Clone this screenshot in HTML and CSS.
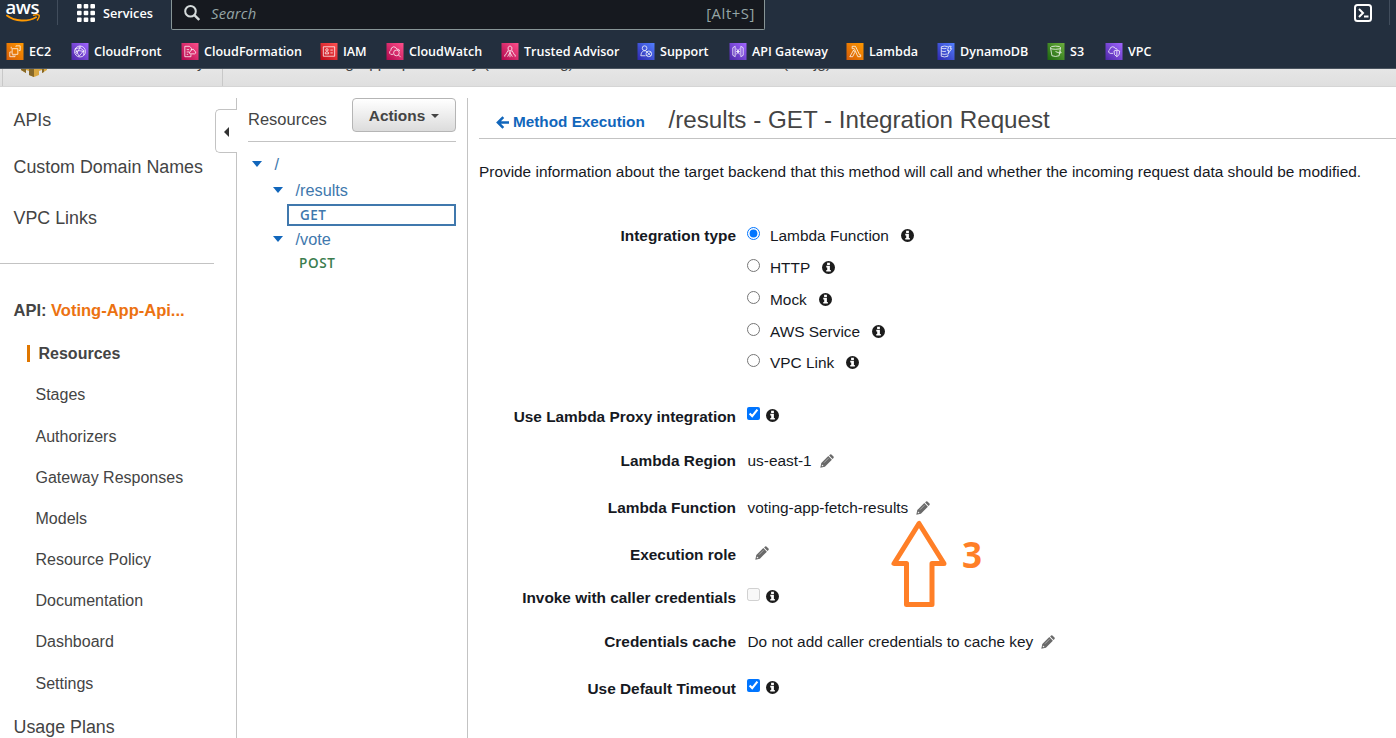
FILE: index.html
```html
<!DOCTYPE html>
<html lang="en">
<head>
<meta charset="utf-8">
<title>API Gateway</title>
<link rel="stylesheet" href="styles.css">
</head>
<body>
<svg width="0" height="0" class="defs">
  <defs>
    <linearGradient id="orange" x1="0" y1="1" x2="1" y2="0"><stop offset="0" stop-color="#d45b07"/><stop offset="1" stop-color="#ff9900"/></linearGradient>
    <linearGradient id="purple" x1="0" y1="1" x2="1" y2="0"><stop offset="0" stop-color="#4d27a8"/><stop offset="1" stop-color="#a166ff"/></linearGradient>
    <linearGradient id="pink" x1="0" y1="1" x2="1" y2="0"><stop offset="0" stop-color="#b0084d"/><stop offset="1" stop-color="#ff4f8b"/></linearGradient>
    <linearGradient id="red" x1="0" y1="1" x2="1" y2="0"><stop offset="0" stop-color="#bd0816"/><stop offset="1" stop-color="#ff5252"/></linearGradient>
    <linearGradient id="blue" x1="0" y1="1" x2="1" y2="0"><stop offset="0" stop-color="#2e27ad"/><stop offset="1" stop-color="#527fff"/></linearGradient>
    <linearGradient id="green" x1="0" y1="1" x2="1" y2="0"><stop offset="0" stop-color="#1b660f"/><stop offset="1" stop-color="#6cae3e"/></linearGradient>
    <symbol id="info" viewBox="0 0 14 14"><circle cx="7" cy="7" r="7" fill="#1c1c1c"/><path d="M5.500 2h3v2.200h-3zM4.600 5.200h3.900v4.400h1v1.800H4.600V9.600h1V7h-1z" fill="#fff"/></symbol>
    <symbol id="pencil" viewBox="0 0 14 14"><path d="M.3 13.700l1-4.600 7-7 3.600 3.600-7 7zM9.100 1.500l1-1q.7-.6 1.300 0l2.100 2.100q.6.6 0 1.300l-1 1z" fill="#6a6a6a"/><path d="M2 10.400l1.600 1.600-1.200.3-.7-.7z" fill="#fff"/><path d="M4 8.700l4.500-4.500" stroke="#c4c4c4" stroke-width=".7"/></symbol>
  </defs>
</svg>

<header class="nav">
  <div class="nav-top">
    <div class="logo">
      <span>aws</span>
      <svg class="smile" width="35" height="9" viewBox="0 0 35 9"><path d="M1 1.500C9 7.800 22 8 30 3.200" fill="none" stroke="#ff9900" stroke-width="1.900" stroke-linecap="round"/><path d="M27.500 1.200c2.500-.6 5-.6 5.600 0 .5.800-.4 3.400-1.700 4.800" fill="none" stroke="#ff9900" stroke-width="1.400" stroke-linecap="round"/></svg>
    </div>
    <i class="sep"></i>
    <svg class="grid-icon" width="18" height="18" viewBox="0 0 18 18" fill="#fff"><rect width="4.6" height="4.6" rx="1"/><rect x="6.7" width="4.6" height="4.6" rx="1"/><rect x="13.4" width="4.6" height="4.6" rx="1"/><rect y="6.7" width="4.6" height="4.6" rx="1"/><rect x="6.7" y="6.7" width="4.6" height="4.6" rx="1"/><rect x="13.4" y="6.7" width="4.6" height="4.6" rx="1"/><rect y="13.4" width="4.6" height="4.6" rx="1"/><rect x="6.7" y="13.4" width="4.6" height="4.6" rx="1"/><rect x="13.4" y="13.4" width="4.6" height="4.6" rx="1"/></svg>
    <span class="services">Services</span>
    <div class="search">
      <svg width="16" height="16" viewBox="0 0 16 16" fill="none" stroke="#d5dbdb" stroke-width="2"><circle cx="6.5" cy="6.3" r="5.3"/><path d="M10.4 10.2l4.8 4.8" stroke-width="2.4"/></svg>
      <span class="ph">Search</span><span class="key">[Alt+S]</span>
    </div>
    <svg class="shell" width="18" height="18" viewBox="0 0 18 18" fill="none" stroke="#fff" stroke-width="2"><rect x="1" y="1" width="16" height="16" rx="2.5"/><path d="M5 5l4 4-4 4M10 12.6h4.5"/></svg>
    <i class="sep faint"></i>
  </div>
  <div class="favs">
    <a><svg viewBox="0 0 18 18"><rect width="18" height="18" fill="url(#orange)"/><path d="M6 6h6v6H6zM10 4V3h4.500v5H13M5.500 9.500H3.500v5H9V13M5 4v2M7 13v1"/></svg><span>EC2</span></a>
    <a><svg viewBox="0 0 18 18"><rect width="18" height="18" fill="url(#purple)"/><circle cx="9" cy="9" r="5.800"/><path d="M4 6l5-1 4 3-5 6M5 12l4-7M4 6l4 8M13 8v5M9 3v2M3.500 10l4-2 6 1"/></svg><span>CloudFront</span></a>
    <a><svg viewBox="0 0 18 18"><rect width="18" height="18" fill="url(#pink)"/><path d="M3.500 14.500V3.500h5l2 2v2M3.500 14.500H10V12M5.500 7H8M5.500 9.500H8M5.500 12H7M9 11.500h5q1.500-.5 1-2l-1-1q-1-3-3.500-1.500l-.5 1.500q-2 .5-1.500 2.500z"/></svg><span>CloudFormation</span></a>
    <a><svg viewBox="0 0 18 18"><rect width="18" height="18" fill="url(#red)"/><path d="M3 4h12v10H3zM10.500 7.500H13M10.500 10.500H13M5 11.500V10q1.700-1.500 3.500 0v1.500z"/><circle cx="6.800" cy="7.300" r="1.300"/></svg><span>IAM</span></a>
    <a><svg viewBox="0 0 18 18"><rect width="18" height="18" fill="url(#pink)"/><path d="M7 12H4.500q-2-1-1-3l1-1q0-3.500 3-4 2.500 0 3.500 2.500 2.500-.5 3 2M12.700 12.700l2.300 2.300"/><circle cx="10.500" cy="10.500" r="3"/></svg><span>CloudWatch</span></a>
    <a><svg viewBox="0 0 18 18"><rect width="18" height="18" fill="url(#pink)"/><path d="M7 7V4.500l2-1.500 2 1.500V7L9 8.500zM4 13l3-5 2 2 2-2 3 5M6.500 14.500L9 10l2.500 4.500M3.500 12.500v2M14.500 12.500v2M9 10v5"/></svg><span>Trusted Advisor</span></a>
    <a><svg viewBox="0 0 18 18"><rect width="18" height="18" fill="url(#blue)"/><circle cx="7.500" cy="5.500" r="2.500"/><path d="M8.500 13.500h-5q0-4 3-5.200h2l1.500 1"/><circle cx="12" cy="11.500" r="3"/><path d="M10 9.500l4 4M14 9.500l-4 4"/></svg><span>Support</span></a>
    <a><svg viewBox="0 0 18 18"><rect width="18" height="18" fill="url(#purple)"/><path d="M6 3.500v11l-2.500-1.500V5zM12 3.500v11l2.500-1.500V5zM7.500 6l3 6M10.500 6l-3 6M7 9h4"/></svg><span>API Gateway</span></a>
    <a><svg viewBox="0 0 18 18"><rect width="18" height="18" fill="url(#orange)"/><path d="M6 3.500h3.500l4.300 9h1.200v2h-3L8.300 6H6zM7.500 7.500l1.300 2.500-2.300 4.500h-3z"/></svg><span>Lambda</span></a>
    <a><svg viewBox="0 0 18 18"><rect width="18" height="18" fill="url(#blue)"/><path d="M4 4q3.500-1.500 7 0M4 4v10q3.500 1.500 7 0v-2M4 5.500q3 1 5.500.2M4 8.500q3 1 5 .2M4 11.500q3 1 6 .2M12 3.500h2.500L13.500 6H15l-3.800 5.500 1-3.500h-1.700z"/></svg><span>DynamoDB</span></a>
    <a><svg viewBox="0 0 18 18"><rect width="18" height="18" fill="url(#green)"/><ellipse cx="8.500" cy="5" rx="5.300" ry="1.700"/><path d="M3.200 5l1.500 8.500q3.800 1.500 7.600 0L13.800 5M8.500 9q5 2.500 6 1.500.3-.8-1.500-1.700"/></svg><span>S3</span></a>
    <a><svg viewBox="0 0 18 18"><rect width="18" height="18" fill="url(#purple)"/><path d="M8 11H5q-2.500-.7-1.500-3l1-1q.5-3 3-3 2.500 0 3 2 1.500-.5 2 1M9 8.500l3-1 3 1q.5 4.500-3 6-3.500-1.500-3-6zM12 7.500v7"/></svg><span>VPC</span></a>
  </div>
</header>

<div class="crumbs">
  <div class="crumb-home"><svg width="26" height="26" viewBox="0 0 26 26"><path d="M0 3h26v16l-5 3v-3l-3 1v4l-5 2-5-2v-4l-3-1v3l-5-3z" fill="#d9a741"/><path d="M0 14l5 2v6l-5-3zM8 16l5 2v8l-5-2zM21 16l2-1v6l-2 1z" fill="#876929"/></svg><span>Amazon API Gateway</span></div>
  <div class="crumb-path"><span class="c1">APIs</span><span class="c2">Voting-App-Api-Gateway (hk4e2u0lbg)</span><span class="c3">Resources</span><span class="c4">(n3ujg)</span></div>
</div>

<div class="body">
  <aside class="side">
    <nav class="side-nav">
      <a class="big apis">APIs</a>
      <a class="big custom">Custom Domain Names</a>
      <a class="big links">VPC Links</a>
      <hr>
      <div class="api">API: <b>Voting-App-Api...</b></div>
      <ul>
        <li class="on"><span>Resources</span></li><li>Stages</li><li>Authorizers</li><li>Gateway Responses</li><li>Models</li><li>Resource Policy</li><li>Documentation</li><li>Dashboard</li><li>Settings</li>
      </ul>
      <a class="big usage">Usage Plans</a>
    </nav>
    <div class="tab"><svg width="5" height="10" viewBox="0 0 5 10"><path d="M5 0v10L0 5z" fill="#333"/></svg></div>
  </aside>

  <section class="res">
    <div class="res-head"><span>Resources</span><button>Actions <svg width="8" height="4" viewBox="0 0 8 4"><path d="M0 0h8L4 4z" fill="#444"/></svg></button></div>
    <div class="tree">
      <div class="node l0"><svg width="10" height="6" viewBox="0 0 10 6"><path d="M0 0h10L5 6z"/></svg>/</div>
      <div class="node l1"><svg width="10" height="6" viewBox="0 0 10 6"><path d="M0 0h10L5 6z"/></svg>/results</div>
      <div class="verb get">GET</div>
      <div class="node l1"><svg width="10" height="6" viewBox="0 0 10 6"><path d="M0 0h10L5 6z"/></svg>/vote</div>
      <div class="verb post">POST</div>
    </div>
  </section>

  <main class="main">
    <div class="head">
      <a class="back"><svg width="13" height="13" viewBox="0 0 13 13" fill="none" stroke="#1166bb" stroke-width="2.500"><path d="M7.300 1.100L1.900 6.500l5.400 5.400M2 6.500h11"/></svg>Method Execution</a>
      <h1>/results - GET - Integration Request</h1>
    </div>
    <p>Provide information about the target backend that this method will call and whether the incoming request data should be modified.</p>
    <form>
      <div class="row"><label>Integration type</label><input type="radio" name="t" checked><span class="opt">Lambda Function</span><svg class="info"><use href="#info"/></svg></div>
      <div class="row g10"><label></label><input type="radio" name="t"><span class="opt">HTTP</span><svg class="info"><use href="#info"/></svg></div>
      <div class="row g10"><label></label><input type="radio" name="t"><span class="opt">Mock</span><svg class="info"><use href="#info"/></svg></div>
      <div class="row g10"><label></label><input type="radio" name="t"><span class="opt">AWS Service</span><svg class="info"><use href="#info"/></svg></div>
      <div class="row g9"><label></label><input type="radio" name="t"><span class="opt">VPC Link</span><svg class="info"><use href="#info"/></svg></div>
      <div class="row g32"><label>Use Lambda Proxy integration</label><input type="checkbox" checked><svg class="info near"><use href="#info"/></svg></div>
      <div class="row g22"><label>Lambda Region</label><span class="val">us-east-1</span><svg class="pen"><use href="#pencil"/></svg></div>
      <div class="row g25"><label>Lambda Function</label><span class="val">voting-app-fetch-results</span><svg class="pen"><use href="#pencil"/></svg></div>
      <div class="row g25"><label>Execution role</label><svg class="pen lone"><use href="#pencil"/></svg></div>
      <div class="row g21"><label>Invoke with caller credentials</label><input type="checkbox" disabled><svg class="info near"><use href="#info"/></svg></div>
      <div class="row g22"><label>Credentials cache</label><span class="val">Do not add caller credentials to cache key</span><svg class="pen"><use href="#pencil"/></svg></div>
      <div class="row g25"><label>Use Default Timeout</label><input type="checkbox" checked><svg class="info near"><use href="#info"/></svg></div>
    </form>
  </main>
</div>

<div class="note">
  <svg width="58" height="90" viewBox="0 0 58 90"><path d="M29 4.500L4 44.500H16.500v41h25.500V44.500H54z" fill="none" stroke="#ff7f27" stroke-width="5" stroke-linejoin="round"/></svg>
  <span>3</span>
</div>
</body>
</html>
```

FILE: styles.css
```css
* { box-sizing: border-box; }
body { margin: 0; height: 738px; overflow: hidden; background: #fff; font: 15.4px/22px Arial, "Liberation Sans", sans-serif; color: #16191f; }
.defs { position: absolute; }
svg { display: block; flex: none; }

.nav { height: 69px; background: #232f3e; border-bottom: 1px solid #4a545f; color: #fff; font-family: "Open Sans", "Noto Sans", sans-serif; font-weight: 600; font-size: 13px; }
.nav-top { display: flex; height: 30px; align-items: flex-start; }
.logo { width: 57px; padding-left: 5.500px; height: 30px; }
.logo span { display: block; font-size: 18.500px; line-height: 20px; margin-top: -3px; height: 17px; letter-spacing: -.4px; }
.sep { width: 1px; height: 25px; background: #414d5c; }
.faint { margin-left: 17px; }
.grid-icon { margin: 4px 8px 0 19px; }
.services { width: 68px; line-height: 18px; padding-top: 4px; font-size: 12.700px; }
.search { width: 594px; height: 30px; background: #16191f; border: 1px solid #879596; border-top: 0; border-radius: 0 0 2px 2px; display: flex; align-items: center; padding: 0 9px 3px 12px; font-weight: 400; font-size: 14.800px; color: #95a5a6; }
.ph { font-style: italic; margin-left: 11px; flex: 1; letter-spacing: .2px; }
.key { letter-spacing: .6px; }
.shell { margin: 4px 0 0 589px; }
.favs { display: grid; grid-template-columns: 65px 110px 139px 66px 115px 136px 92px 117px 91px 110px 58px 60px; padding: 13px 0 0 5.500px; }
.favs a { display: flex; gap: 5.500px; height: 17px; line-height: 17px; white-space: nowrap; font-size: 12.550px; }
.favs svg { width: 18px; height: 17px; fill: none; stroke: #fff; stroke-width: .8; }
.favs rect { stroke: none; }

.crumbs { height: 18px; overflow: hidden; display: flex; background: linear-gradient(#e6e6e6, #dfdfdf); border-bottom: 1px solid #d5d5d5; padding-left: 2px; color: #444; white-space: nowrap; }
.crumb-home { display: flex; width: 221px; height: 18px; border: solid #c8c8c8; border-width: 0 1px; padding-left: 18px; }
.crumb-home svg { margin-top: -18px; }
.crumb-home span { margin: -17px 0 0 8px; font-size: 15.400px; }
.crumb-path { display: flex; margin-top: -17px; }
.c1 { width: 88px; padding-left: 20px; }
.c2 { width: 299px; }
.c3 { width: 173px; }

.body { display: flex; height: 651px; padding-top: 11px; }
.side { position: relative; width: 237px; border-right: 1px solid #c3c3c3; color: #444; }
.side-nav { display: flex; flex-direction: column; }
.big { font-size: 17.850px; line-height: 22px; padding-left: 13.500px; white-space: nowrap; }
.apis { margin-top: 11px; }
.custom { margin-top: 25px; }
.links { margin-top: 29px; }
hr { width: 214px; height: 1px; border: 0; background: #c3c3c3; margin: 34px 0 35px; }
.api { font-size: 16.500px; font-weight: bold; padding-left: 13.500px; }
.api b { color: #ec7211; }
ul { list-style: none; margin: 12px 0 0; padding: 0; font-size: 16px; }
li { height: 41px; line-height: 41px; padding-left: 35.500px; }
li:nth-child(2), li:nth-child(8) { margin-bottom: 1px; }
.on { display: flex; align-items: center; padding-left: 27px; font-weight: bold; }
.on span { border-left: 3px solid #e07700; line-height: 17px; padding-left: 8.500px; }
.usage { margin-top: 12px; }
.tab { position: absolute; left: 215px; top: 11px; width: 22px; height: 44px; background: #fff; border: 1px solid #c3c3c3; border-right: 0; border-radius: 5px 0 0 5px; padding: 17px 0 0 8px; }

.res { width: 231px; padding-left: 11px; border-right: 1px solid #c3c3c3; }
.res-head { width: 208px; height: 44px; border-bottom: 1px solid #c3c3c3; display: flex; justify-content: space-between; color: #444; font-size: 16.500px; line-height: 42px; }
button { width: 104px; height: 34px; display: flex; align-items: center; justify-content: center; gap: 6px; padding: 2px 0 0; border: 1px solid #b5b5b5; border-radius: 4px; background: linear-gradient(#fff, #dcdcdc); font: bold 15.400px Arial, "Liberation Sans", sans-serif; color: #444; }
.tree { padding-top: 9px; color: #4078ad; }
.node { display: flex; align-items: center; gap: 12.500px; height: 26px; font-size: 16.300px; line-height: 24px; }
.node svg { fill: #1166bb; }
.l0 { padding-left: 4px; }
.l1 { padding-left: 25px; }
.verb { font: 600 13.500px/18px "Open Sans", sans-serif; }
.get { width: 169px; height: 22px; margin: 1px 0 0 39px; padding-left: 11px; border: 2px solid #4078ad; letter-spacing: .4px; }
.post { margin: 2px 0 0 51px; color: #3b7d4e; letter-spacing: .6px; }

.main { flex: 1; padding-left: 11px; white-space: nowrap; min-width: 0; }
.head { height: 41px; border-bottom: 1px solid #c3c3c3; display: flex; padding-left: 17px; }
.back { display: flex; width: 172.500px; gap: 4px; align-items: center; height: 24px; margin-top: 12px; font-weight: bold; font-size: 15.300px; color: #1166bb; }
h1 { margin: 0; font-size: 24.200px; line-height: 43px; font-weight: 400; color: #444; }
p { margin: 22px 0 0; }
form { padding-top: 42px; }
.row { display: flex; align-items: center; height: 22px; }
.row label { width: 257px; margin-right: 11px; text-align: right; font-weight: bold; }
input { margin: 0 0 5px; width: 13px; height: 13px; }
input[type=checkbox] { margin-bottom: 7px; }
.opt { margin: 0 12px 0 10px; }
.info { width: 13px; height: 13px; margin-bottom: 1px; }
.near { margin: 0 0 3px 6px; }
.val { margin-left: .5px; }
.pen { width: 14px; height: 14px; margin-left: 8px; }
.lone { margin-top: -4px; }
.g9 { margin-top: 9px; } .g10 { margin-top: 10px; } .g21 { margin-top: 21px; } .g22 { margin-top: 22px; } .g25 { margin-top: 25px; } .g32 { margin-top: 32px; }

.note { position: absolute; left: 890px; top: 519px; display: flex; gap: 14px; color: #ff7f27; font: bold 35px/72px "Open Sans", sans-serif; }
```
